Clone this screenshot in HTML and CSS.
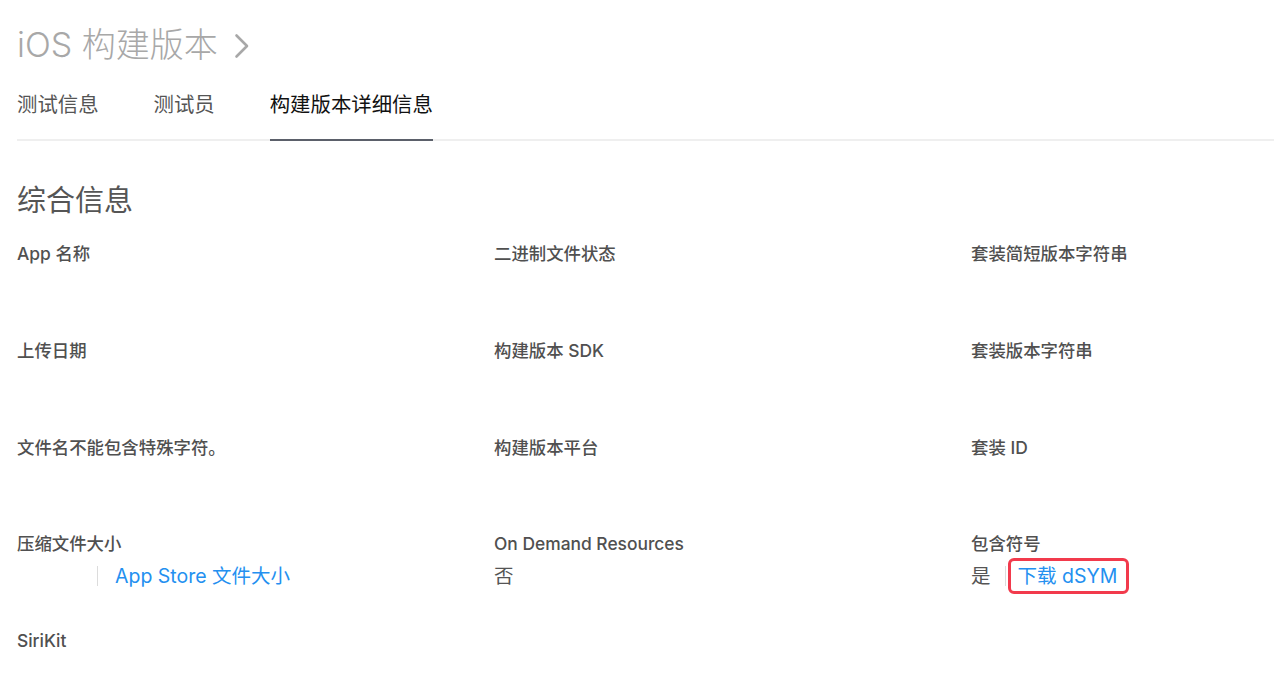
FILE: index.html
```html
<!DOCTYPE html>
<html lang="zh-CN">
<head>
<meta charset="utf-8">
<title>iOS 构建版本</title>
<link rel="stylesheet" href="styles.css">
</head>
<body>
<div class="page">
  <h1 class="title">iOS 构建版本<svg class="chev" width="16" height="26" viewBox="0 0 16 26"><path d="M2.5 2.5 L13 13 L2.5 23.5" fill="none" stroke="#a8a8a8" stroke-width="2.6" stroke-linecap="round" stroke-linejoin="round"/></svg></h1>
  <nav class="tabs">
    <span class="tab">测试信息</span>
    <span class="tab">测试员</span>
    <span class="tab active">构建版本详细信息</span>
  </nav>
  <h2 class="section">综合信息</h2>
  <div class="grid">
    <div class="cell"><div class="label">App 名称</div></div>
    <div class="cell"><div class="label">二进制文件状态</div></div>
    <div class="cell"><div class="label">套装简短版本字符串</div></div>

    <div class="cell"><div class="label">上传日期</div></div>
    <div class="cell"><div class="label">构建版本 SDK</div></div>
    <div class="cell"><div class="label">套装版本字符串</div></div>

    <div class="cell"><div class="label">文件名不能包含特殊字符。</div></div>
    <div class="cell"><div class="label">构建版本平台</div></div>
    <div class="cell"><div class="label">套装 ID</div></div>

    <div class="cell">
      <div class="label">压缩文件大小</div>
      <div class="value"><span class="blank"></span><span class="sep"></span><a class="link">App Store 文件大小</a></div>
    </div>
    <div class="cell">
      <div class="label">On Demand Resources</div>
      <div class="value">否</div>
    </div>
    <div class="cell">
      <div class="label">包含符号</div>
      <div class="value"><span>是</span><span class="sep sep-small"></span><a class="link boxed">下载 dSYM</a></div>
    </div>

    <div class="cell"><div class="label">SiriKit</div></div>
  </div>
</div>
</body>
</html>
```
FILE: styles.css
```css
html, body {
  margin: 0;
  padding: 0;
  background: #ffffff;
}
body {
  font-family: Inter, "Noto Sans CJK SC", sans-serif;
  color: #4a4a4a;
}
.page {
  padding-left: 17px;
}
.title {
  margin: 25px 0 0 0;
  font-size: 34px;
  line-height: 40px;
  font-weight: 300;
  color: #a8a8a8;
  display: flex;
  align-items: center;
}
.chev {
  margin-left: 16px;
  margin-top: 2px;
}
.tabs {
  display: flex;
  padding-top: 26px;
  border-bottom: 2px solid #efefef;
}
.tab {
  font-size: 20.4px;
  line-height: 24px;
  color: #555555;
  padding-bottom: 24px;
  margin-right: 55px;
  margin-bottom: -2px;
  border-bottom: 2px solid transparent;
  font-family: "Noto Sans CJK SC", sans-serif;
}
.tab.active {
  color: #111111;
  border-bottom-color: #5b606a;
}
.section {
  margin: 39px 0 0 0;
  font-size: 29px;
  line-height: 36px;
  font-weight: 400;
  color: #555555;
  font-family: "Noto Sans CJK SC", sans-serif;
}
.grid {
  margin-top: 26px;
  display: grid;
  grid-template-columns: 477px 477px 1fr;
  grid-template-rows: repeat(4, 96.8px) 36px;
}
.label {
  font-size: 17.4px;
  line-height: 24px;
  font-weight: 500;
  color: #505050;
}
.value {
  margin-top: 5px;
  display: flex;
  align-items: center;
  font-size: 19.5px;
  line-height: 24px;
  color: #555555;
  height: 30px;
}
.blank {
  width: 80px;
}
.sep {
  display: inline-block;
  width: 1px;
  height: 20px;
  background: #dcdcdc;
  margin-right: 17px;
}
.sep-small {
  margin-left: 14px;
  margin-right: 2px;
}
.link {
  color: #2490f0;
  text-decoration: none;
}
.boxed {
  border: 3px solid #f23a4c;
  border-radius: 6px;
  padding: 3px 9px 3px 7px;
}
```
